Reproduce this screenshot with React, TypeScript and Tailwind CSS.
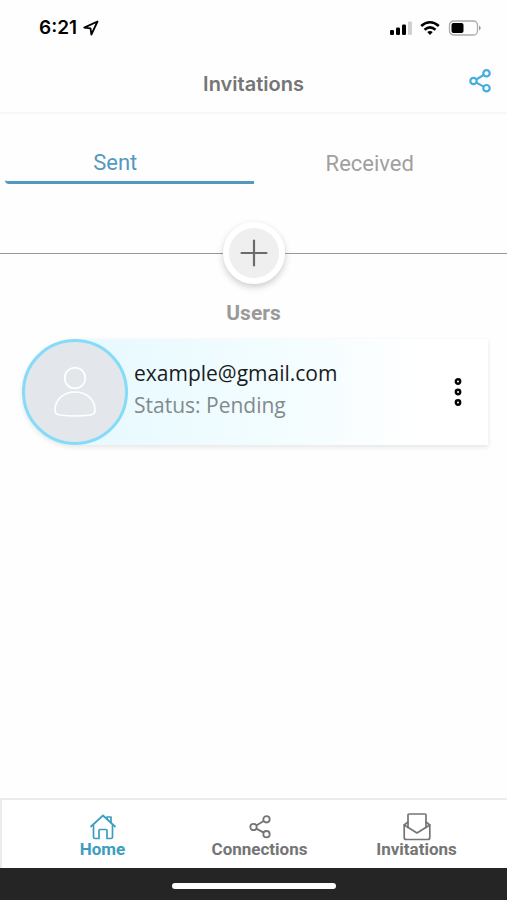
import { useState } from "react";
import type { ReactNode } from "react";

function ShareIcon({ className, strokeWidth }: { className: string; strokeWidth: number }) {
  return (
    <svg viewBox="0 0 24 24" className={className} fill="none" stroke="currentColor" strokeWidth={strokeWidth} aria-hidden="true">
      <circle cx="18.5" cy="4.3" r="3.2" />
      <circle cx="5.5" cy="12" r="3.2" />
      <circle cx="18.5" cy="19.2" r="3.2" />
      <path d="M8.3 10.4 15.7 6M8.3 13.6l7.4 4" />
    </svg>
  );
}

function HomeIcon() {
  return (
    <svg viewBox="0 0 28 28" className="size-7" fill="none" stroke="currentColor" strokeWidth="1.7" strokeLinejoin="round" strokeLinecap="round" aria-hidden="true">
      <path d="M2 13.5 14 2.5 26 13.5" />
      <path d="M4.5 12.500V24q0 1.500 1.500 1.500h4v-8q0-1 1-1h6q1 0 1 1v8h4q1.500 0 1.500-1.500V12.500" />
      <path d="M18 5.500V4h4v5.500" />
    </svg>
  );
}

function EnvelopeIcon() {
  return (
    <svg viewBox="0 0 28 28" className="size-7" fill="none" stroke="currentColor" strokeWidth="1.7" strokeLinejoin="round" strokeLinecap="round" aria-hidden="true">
      <path d="M5 14.500V2q0-1 1-1h16q1 0 1 1v12.500" />
      <path d="M5 9 1.200 12v12.500q0 2 2 2h21.600q2 0 2-2V12L23 9" />
      <path d="M1.200 12 14 20l12.800-8" />
    </svg>
  );
}

function StatusBar() {
  return (
    <div className="flex h-14 items-center justify-between pr-[25px] pl-[39px] text-black">
      <div className="flex items-center gap-1.5">
        <span className="font-['Inter',sans-serif] text-[19px] font-semibold">6:21</span>
        <svg viewBox="0 0 16 16" className="size-4" fill="none" stroke="currentColor" strokeWidth="1.8" strokeLinejoin="round" aria-hidden="true">
          <path d="M14.500 1.500 1.200 7.600l6.300.8.900 6.100Z" />
        </svg>
      </div>
      <div className="flex items-center gap-2">
        <svg viewBox="0 0 24 16" className="h-4 w-6" fill="currentColor" aria-hidden="true">
          <rect x="2" y="10" width="4" height="5" rx="1.300" />
          <rect x="8" y="7.500" width="4" height="7.500" rx="1.300" />
          <rect x="14" y="4.500" width="4" height="10.500" rx="1.300" />
          <rect x="20" y="1.500" width="4" height="13.500" rx="1.300" fill="#d0d0d0" />
        </svg>
        <svg viewBox="0 0 20 16" className="h-4 w-5" fill="none" stroke="currentColor" strokeWidth="2.600" aria-hidden="true">
          <path d="M1.200 6Q10-1.500 18.800 6" />
          <path d="M4.500 9.700q5.500-4.500 11 0" />
          <path d="m7.200 12 2.800 3 2.800-3q-2.800-2-5.600 0Z" fill="currentColor" stroke="none" />
        </svg>
        <svg viewBox="0 0 34 16" className="h-4 w-[34px]" fill="none" aria-hidden="true">
          <rect x="1.500" y="1" width="28" height="14" rx="4" stroke="#ababab" strokeWidth="1.300" />
          <rect x="3.500" y="3" width="12" height="10" rx="2" fill="#000" />
          <path d="M31 5.500q3.500 2.500 0 5Z" fill="#999" />
        </svg>
      </div>
    </div>
  );
}

function NavItem({ icon, label, active = false }: { icon: ReactNode; label: string; active?: boolean }) {
  return (
    <a
      href="#"
      aria-current={active ? "page" : undefined}
      className={active ? "flex flex-1 flex-col items-center text-[#3c9dbe]" : "flex flex-1 flex-col items-center text-[#757575]"}
    >
      <span className="flex h-7 items-center">{icon}</span>
      <span className="text-[17px] leading-4 font-bold">{label}</span>
    </a>
  );
}

export default function App() {
  const [tab, setTab] = useState("Sent");
  return (
    <div className="flex min-h-screen flex-col bg-[#fefefe] font-['Roboto',sans-serif]">
      <StatusBar />
      <header className="grid h-[58px] grid-cols-[1fr_auto_1fr] items-center border-b-2 border-[#f6f6f6] px-[15px]">
        <h1 className="col-start-2 font-['Inter',sans-serif] text-xl font-semibold text-[#757575]">Invitations</h1>
        <button type="button" aria-label="Share" className="mb-1.5 justify-self-end text-[#43ade0]">
          <ShareIcon className="size-6" strokeWidth={2.2} />
        </button>
      </header>

      <div role="tablist" className="mt-7 grid h-[42px] grid-cols-2 px-[5px]">
        {["Sent", "Received"].map((name) => (
          <button
            key={name}
            type="button"
            role="tab"
            aria-selected={tab === name}
            onClick={() => setTab(name)}
            className={
              tab === name
                ? "rounded-bl-sm border-b-3 border-[#5299bf] pt-0.5 pr-7 text-[22px] text-[#5299bf]"
                : "border-b-3 border-transparent pt-1 pr-4 text-[22px] text-[#a0a0a0]"
            }
          >
            {name}
          </button>
        ))}
      </div>

      <main className="flex-1 pt-[38px]">
        <div className="flex items-center">
          <div className="h-px flex-1 bg-[#999999]" />
          <button
            type="button"
            aria-label="Add user"
            className="flex size-[62px] items-center justify-center rounded-full border-[6px] border-white bg-[#efefef] text-[#6b6b6b] shadow-[0_3px_7px_rgba(0,0,0,0.2)]"
          >
            <svg viewBox="0 0 28 28" className="size-7" fill="none" stroke="currentColor" strokeWidth="2.200" strokeLinecap="round" aria-hidden="true">
              <path d="M14 1.500v25M1.500 14h25" />
            </svg>
          </button>
          <div className="h-px flex-1 bg-[#999999]" />
        </div>
        <h2 className="mt-[17px] text-center text-[21px] leading-6 font-bold text-[#9a9a9a]">Users</h2>
        <article className="mt-3.5 mr-[19px] ml-[22px] flex h-[106px] items-center rounded-l-full rounded-r-sm bg-linear-to-r from-[#e9faff] from-20% via-[#f4fdff] via-60% to-white to-85% shadow-[0_2px_5px_rgba(0,0,0,0.1)]">
          <div className="flex size-[106px] items-center justify-center rounded-full border-[3px] border-[#85dbf8] bg-[#e3e6ea] text-white">
            <svg viewBox="0 0 44 50" className="h-[50px] w-11" fill="none" stroke="currentColor" strokeWidth="1.700" aria-hidden="true">
              <circle cx="22" cy="11" r="10.300" />
              <path d="M22 25C11 25 2 32 2 43.500c0 3 2 4 5 4.500q15 2 30 0c3-.5 5-1.500 5-4.500C42 32 33 25 22 25Z" />
            </svg>
          </div>
          <div className="min-w-0 flex-1 pb-1.5 pl-1.5 font-['Open_Sans','Noto_Sans',sans-serif] text-[21px] leading-8">
            <p className="text-[#191c1e]">example@gmail.com</p>
            <p className="text-[#838a8c]">Status: Pending</p>
          </div>
          <button type="button" aria-label="More options" className="mr-5 text-black">
            <svg viewBox="0 0 20 30" className="h-[30px] w-5" fill="none" stroke="currentColor" strokeWidth="2.400" aria-hidden="true">
              <circle cx="10" cy="4.500" r="2.200" />
              <circle cx="10" cy="15" r="2.200" />
              <circle cx="10" cy="25.500" r="2.200" />
            </svg>
          </button>
        </article>
      </main>

      <nav aria-label="Main" className="flex h-[70px] border-t-2 border-l-2 border-[#ececec] bg-white pt-[13px] pr-3 pl-[22px]">
        <NavItem icon={<HomeIcon />} label="Home" active />
        <NavItem icon={<ShareIcon className="size-6" strokeWidth={1.8} />} label="Connections" />
        <NavItem icon={<EnvelopeIcon />} label="Invitations" />
      </nav>
      <div className="flex h-8 items-center justify-center bg-[#252525] pt-1">
        <div className="h-1.5 w-[164px] rounded-full bg-white" />
      </div>
    </div>
  );
}
